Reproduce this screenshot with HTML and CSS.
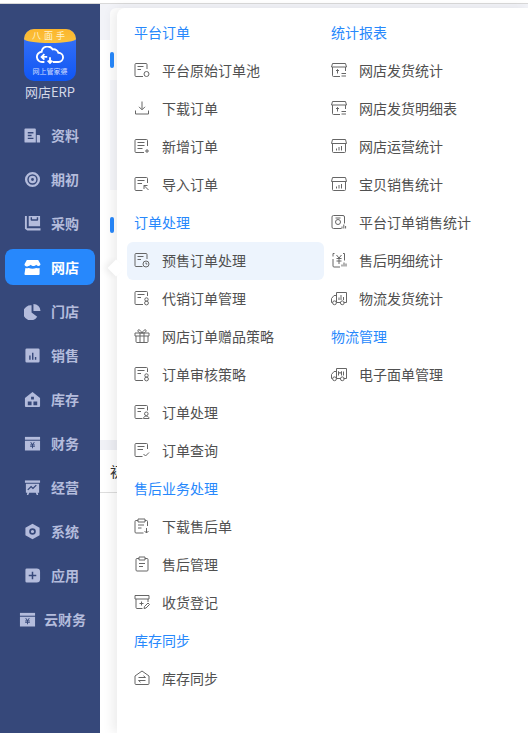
FILE: index.html
```html
<!DOCTYPE html>
<html lang="en">
<head>
  <meta charset="UTF-8" />
  <meta name="viewport" content="width=device-width, initial-scale=1.0"/>
  <title>网店ERP</title>
  <link rel="stylesheet" href="styles.css">
</head>
<body>
  <svg class="defs" aria-hidden="true">
    <!-- menu icons, line style -->
    <symbol id="m-pool" viewBox="0 0 16 16"><path d="M13 7V2.500a1 1 0 0 0-1-1H2a1 1 0 0 0-1 1v11a1 1 0 0 0 1 1h7M3.500 4.500h6M3.500 7.500h3.500"/><circle cx="12.500" cy="12" r="2.500"/></symbol>
    <symbol id="m-down" viewBox="0 0 16 16"><path d="M8 1.500v8M5 6.800l3 3 3-3M1.500 10.500v3.500h13v-3.500"/></symbol>
    <symbol id="m-add" viewBox="0 0 16 16"><path d="M13.500 8V2.500a1 1 0 0 0-1-1H2a1 1 0 0 0-1 1v11a1 1 0 0 0 1 1h8M3.500 4.500h7M3.500 7.500h7M3.500 10.500h5M13 11v4M11 13h4"/></symbol>
    <symbol id="m-import" viewBox="0 0 16 16"><path d="M13.500 7V2.500a1 1 0 0 0-1-1H2a1 1 0 0 0-1 1v11a1 1 0 0 0 1 1h6.500M3.500 4.500h7M3.500 7.500h4.500M10 9.500l4.500 4.500M10 13V9.500h3.500"/></symbol>
    <symbol id="m-clock" viewBox="0 0 16 16"><path d="M13 7V2.500a1 1 0 0 0-1-1H2a1 1 0 0 0-1 1v11a1 1 0 0 0 1 1h6.500M3.500 4.500h6M3.500 7.500h3.500"/><circle cx="12" cy="12" r="3"/><path d="M12 10.500V12h1.300"/></symbol>
    <symbol id="m-agent" viewBox="0 0 16 16"><path d="M13.500 6V2.500a1 1 0 0 0-1-1H2a1 1 0 0 0-1 1v11a1 1 0 0 0 1 1h7M3.500 4.500h7M3.500 7.500h3.500"/><circle cx="12.500" cy="9.500" r="1.700"/><circle cx="12.500" cy="13" r="1.900"/></symbol>
    <symbol id="m-gift" viewBox="0 0 16 16"><path d="M1 5h14v3H1zM2 8v5.500a1 1 0 0 0 1 1h10a1 1 0 0 0 1-1V8M6 5v9.500M10 5v9.500M8 5C6 1 3.500 1 4 3.200 4.300 4.500 6 5 8 5c2 0 3.700-.5 4-1.800C12.500 1 10 1 8 5z"/></symbol>
    <symbol id="m-person" viewBox="0 0 16 16"><path d="M13.500 6.500V2.500a1 1 0 0 0-1-1H2a1 1 0 0 0-1 1v11a1 1 0 0 0 1 1h6.500M3.500 4.500h7M3.500 7.500h3.500"/><circle cx="12.300" cy="9.800" r="1.800"/><path d="M9.500 14.500c0-3.200 5.500-3.200 5.500 0z"/></symbol>
    <symbol id="m-check" viewBox="0 0 16 16"><path d="M13.500 7V2.500a1 1 0 0 0-1-1H2a1 1 0 0 0-1 1v11a1 1 0 0 0 1 1h6.500M3.500 4.500h7M3.500 7.500h5.500M9.500 12l2 2 3.500-3.500"/></symbol>
    <symbol id="m-afterdown" viewBox="0 0 16 16"><path d="M13.500 8V3.500a1 1 0 0 0-1-1H11M4 2.500H2a1 1 0 0 0-1 1V14a1 1 0 0 0 1 1h7.500M4 1h7v3H4zM4 7h6M4 10h3.500M12.500 10v5M10.500 13l2 2 2-2"/></symbol>
    <symbol id="m-clip" viewBox="0 0 16 16"><path d="M11 2.500h2a1 1 0 0 1 1 1V14a1 1 0 0 1-1 1H3a1 1 0 0 1-1-1V3.500a1 1 0 0 1 1-1h2M5 1h6v3H5zM5 7.500h6M5 10.500h4"/></symbol>
    <symbol id="m-receive" viewBox="0 0 16 16"><path d="M1 1.500h14v3.500H1zM2 5v8.500a1 1 0 0 0 1 1h5.500M14 5v3M5.500 9.500h4M7.500 7.500v4M10 14.500l.5-2 3.500-3.500 1.500 1.500-3.500 3.500z"/></symbol>
    <symbol id="m-sync" viewBox="0 0 16 16"><path d="M8 1l7 5v7.500a1 1 0 0 1-1 1H2a1 1 0 0 1-1-1V6zM4.500 7.500h7l-2-1.700M11.500 10.500h-7l2 1.700"/></symbol>
    <symbol id="m-ship" viewBox="0 0 16 16"><path d="M1.500 1.500h13l1 3.500h-15zM1.500 5v8.500a1 1 0 0 0 1 1H9M14.500 5v4M6.500 11.500V7.500M5 9l1.500-1.500L8 9M10.500 11.500h4.500M10.500 14h4.500"/></symbol>
    <symbol id="m-shop" viewBox="0 0 16 16"><path d="M1.500 1.500h13l1 4h-15zM1.500 5.500v8a1 1 0 0 0 1 1h11a1 1 0 0 0 1-1v-8M5.500 12.500v-2M8 12.500V9M10.500 12.500V8"/></symbol>
    <symbol id="m-platform" viewBox="0 0 16 16"><path d="M10.500 14.500H2.500A1.500 1.500 0 0 1 1 13V3a1.500 1.500 0 0 1 1.500-1.500h9.500A1.500 1.500 0 0 1 13.500 3v6.500M4.500 4h5"/><circle cx="7" cy="8" r="2.500"/><path d="M11 14.500V12.500M12.800 14.500V10.500M14.600 14.500V12"/></symbol>
    <symbol id="m-yen" viewBox="0 0 16 16"><path d="M3.500 1.500H2v3M12 1.500h1.500v7M2 7v7a1 1 0 0 0 1 1h6M5.500 3l2.500 3 2.500-3M5.500 6.500h5M5.500 9h5M8 6v6M11 14.500V12.500M13 14.500V10.500M15 14.500V11.500"/></symbol>
    <symbol id="m-truck" viewBox="0 0 16 16"><path d="M5.500 12.500h4.500M12.500 12.500h3V2.500h-10v10M5.500 5.500H3L.5 8.500v4h1M8 10V7.500M10 10V5M12.500 10V7"/><circle cx="3.500" cy="12.800" r="1.900"/><circle cx="11.300" cy="12.800" r="1.900"/></symbol>
    <symbol id="m-waybill" viewBox="0 0 16 16"><path d="M5.500 12.500h4.500M12.500 12.500h3V2.500h-10v10M5.500 5.500H3L.5 8.500v4h1M7.500 9.500V5.500l1.500 2 1.500-2v4M12.500 5.500v4"/><circle cx="3.500" cy="12.800" r="1.900"/><circle cx="11.300" cy="12.800" r="1.900"/></symbol>
  </svg>

  <div class="topline"></div>

  <div class="page">
    <aside class="sidebar">
      <div class="logo">
        <div class="logoBox">
          <div class="logoTop">八面手</div>
          <svg class="logoCloud" viewBox="0 0 30 20">
            <path d="M9 17H7a5.500 5.500 0 0 1-1-11 6.500 6.500 0 0 1 12-2.500 5 5 0 0 1 6 3.500 5 5 0 0 1 0 10h-6M6 11.500h6M9 8.500l-3 3 3 3M15 12v6M12.500 15.500l2.500 2.500 2.500-2.500"/>
          </svg>
          <div class="logoText">网上管家婆</div>
        </div>
        <div class="logoName">网店ERP</div>
      </div>

      <a class="navItem">
        <svg class="navIcon" viewBox="0 0 18 18"><path d="M1.500 1.500h10a1 1 0 0 1 1 1v14h-11a1 1 0 0 1-1-1v-13a1 1 0 0 1 1-1z"/><path class="cut" d="M4 6h6M4 9h4M4 12h6"/><path d="M13.500 8.500h2.500a1 1 0 0 1 1 1v7h-3.500z"/></svg>
        <span>资料</span>
      </a>
      <a class="navItem">
        <svg class="navIcon" viewBox="0 0 18 18"><path fill-rule="evenodd" d="M9 1a8 8 0 1 1 0 16A8 8 0 0 1 9 1zm0 2.500a5.500 5.500 0 1 0 0 11 5.500 5.500 0 0 0 0-11z"/><path fill-rule="evenodd" d="M9 5a4 4 0 1 1 0 8 4 4 0 0 1 0-8zm0 2.500a1.500 1.500 0 1 0 0 3 1.500 1.500 0 0 0 0-3z"/></svg>
        <span>期初</span>
      </a>
      <a class="navItem">
        <svg class="navIcon" viewBox="0 0 18 18"><path d="M1 1h2v13h14.500v2.500H3.500L1 14.500z"/><path fill-rule="evenodd" d="M5 1h12v11H5zm2 1.500v2.500a1 1 0 0 0 1 1h6a1 1 0 0 0 1-1V2.500h-1.500V4.500h-5V2.500z"/></svg>
        <span>采购</span>
      </a>
      <a class="navItem active">
        <svg class="navIcon" viewBox="0 0 18 18"><path d="M3 1h12l2.500 4.500a2.500 2.500 0 0 1-2 2c-1.200 0-2-.6-2.500-1.300-.5.700-1.700 1.300-3 1.300s-2.500-.6-3-1.300C6.500 6.900 5.700 7.500 4.500 7.500a2.500 2.500 0 0 1-4-2z"/><path d="M1.500 9.500c1.200.5 2.500.4 3.500 0 1.200.6 2.700.8 4 .8s2.800-.2 4-.8c1 .4 2.300.5 3.500 0V16a1 1 0 0 1-1 1h-14a1 1 0 0 1-1-1z"/></svg>
        <span>网店</span>
      </a>
      <a class="navItem">
        <svg class="navIcon" viewBox="0 0 18 18"><path d="M8 2.500V10l6 4.500A8 8 0 1 1 8 2.500z"/><path d="M10 1a7.500 7.500 0 0 1 7.500 7.500H10z"/></svg>
        <span>门店</span>
      </a>
      <a class="navItem">
        <svg class="navIcon" viewBox="0 0 18 18"><path fill-rule="evenodd" d="M3 1.500h12a1.500 1.500 0 0 1 1.500 1.500v12a1.500 1.500 0 0 1-1.500 1.500H3A1.500 1.500 0 0 1 1.500 15V3A1.500 1.500 0 0 1 3 1.500zM5.500 9v4.500H7V9zm3-3v7.500H10V6zm3 4.500v3H13v-3z"/></svg>
        <span>销售</span>
      </a>
      <a class="navItem">
        <svg class="navIcon" viewBox="0 0 18 18"><path fill-rule="evenodd" d="M9 1l8 6.500V16a1 1 0 0 1-1 1H2a1 1 0 0 1-1-1V7.500zM7.500 6v3h3V6zM4 11v4h4v-4zm6 0v4h4v-4z"/></svg>
        <span>库存</span>
      </a>
      <a class="navItem">
        <svg class="navIcon" viewBox="0 0 18 18"><path d="M1 2h16v3H1z"/><path fill-rule="evenodd" d="M1 6h16v10.500H1zm5.500 1.800L8.300 10H6.500v1h2v.8h-2v1h2V14h1v-1.200h2v-1h-2V11h2v-1H9.700l1.800-2.200h-1.200L9 9.500 7.700 7.800z"/></svg>
        <span>财务</span>
      </a>
      <a class="navItem">
        <svg class="navIcon" viewBox="0 0 18 18"><path d="M1 1.500h16v2.500H1z"/><path fill-rule="evenodd" d="M2 5h14v9.500h-1.500L15 17h-1.500l-1-2.500h-7L4.500 17H3l.5-2.500H2zm2.500 7l3-3 2 1.800 4-3.800-1-.8-3 2.800-2-1.800-4 4z"/></svg>
        <span>经营</span>
      </a>
      <a class="navItem">
        <svg class="navIcon" viewBox="0 0 18 18"><path fill-rule="evenodd" d="M9 .8l7.500 4.100v8.200L9 17.200 1.500 13.100V4.900zM9 5.500a3.500 3.500 0 1 0 0 7 3.500 3.500 0 0 0 0-7zM9 7.300a1.700 1.700 0 1 1 0 3.400 1.700 1.700 0 0 1 0-3.400z"/></svg>
        <span>系统</span>
      </a>
      <a class="navItem">
        <svg class="navIcon" viewBox="0 0 18 18"><path fill-rule="evenodd" d="M3 1.500h10.500A3.500 3.500 0 0 1 17 5v8a3.500 3.500 0 0 1-3.500 3.500H3A1.500 1.500 0 0 1 1.500 15V3A1.500 1.500 0 0 1 3 1.500zM8.200 5v3.200H5v1.600h3.200V13h1.600V9.800H13V8.200H9.800V5z"/></svg>
        <span>应用</span>
      </a>
      <a class="navItem wide">
        <svg class="navIcon" viewBox="0 0 18 18"><path d="M1 2h16v3H1z"/><path fill-rule="evenodd" d="M1 6h16v10.500H1zm5.500 1.800L8.300 10H6.500v1h2v.8h-2v1h2V14h1v-1.200h2v-1h-2V11h2v-1H9.700l1.800-2.200h-1.200L9 9.500 7.700 7.800z"/></svg>
        <span>云财务</span>
      </a>
    </aside>

    <main class="content">
      <div class="tabs"><div class="tab"></div></div>
      <div class="block">
        <div class="mark"></div>
        <div class="panel"></div>
        <div class="mark second"></div>
      </div>
      <div class="tableHead"></div>
      <div class="tableRow">初</div>
    </main>
  </div>

  <div class="menu">
    <div class="arrow"></div>
    <div class="menuCol">
      <h3>平台订单</h3>
      <a class="menuItem"><svg class="ico"><use href="#m-pool"/></svg>平台原始订单池</a>
      <a class="menuItem"><svg class="ico"><use href="#m-down"/></svg>下载订单</a>
      <a class="menuItem"><svg class="ico"><use href="#m-add"/></svg>新增订单</a>
      <a class="menuItem"><svg class="ico"><use href="#m-import"/></svg>导入订单</a>
      <h3>订单处理</h3>
      <a class="menuItem current"><svg class="ico"><use href="#m-clock"/></svg>预售订单处理</a>
      <a class="menuItem"><svg class="ico"><use href="#m-agent"/></svg>代销订单管理</a>
      <a class="menuItem"><svg class="ico"><use href="#m-gift"/></svg>网店订单赠品策略</a>
      <a class="menuItem"><svg class="ico"><use href="#m-agent"/></svg>订单审核策略</a>
      <a class="menuItem"><svg class="ico"><use href="#m-person"/></svg>订单处理</a>
      <a class="menuItem"><svg class="ico"><use href="#m-check"/></svg>订单查询</a>
      <h3>售后业务处理</h3>
      <a class="menuItem"><svg class="ico"><use href="#m-afterdown"/></svg>下载售后单</a>
      <a class="menuItem"><svg class="ico"><use href="#m-clip"/></svg>售后管理</a>
      <a class="menuItem"><svg class="ico"><use href="#m-receive"/></svg>收货登记</a>
      <h3>库存同步</h3>
      <a class="menuItem"><svg class="ico"><use href="#m-sync"/></svg>库存同步</a>
    </div>
    <div class="menuCol">
      <h3>统计报表</h3>
      <a class="menuItem"><svg class="ico"><use href="#m-ship"/></svg>网店发货统计</a>
      <a class="menuItem"><svg class="ico"><use href="#m-ship"/></svg>网店发货明细表</a>
      <a class="menuItem"><svg class="ico"><use href="#m-shop"/></svg>网店运营统计</a>
      <a class="menuItem"><svg class="ico"><use href="#m-shop"/></svg>宝贝销售统计</a>
      <a class="menuItem"><svg class="ico"><use href="#m-platform"/></svg>平台订单销售统计</a>
      <a class="menuItem"><svg class="ico"><use href="#m-yen"/></svg>售后明细统计</a>
      <a class="menuItem"><svg class="ico"><use href="#m-truck"/></svg>物流发货统计</a>
      <h3>物流管理</h3>
      <a class="menuItem"><svg class="ico"><use href="#m-waybill"/></svg>电子面单管理</a>
    </div>
  </div>
</body>
</html>
```

FILE: styles.css
```css
*, *::before, *::after { box-sizing: border-box; }
* {
  margin: 0;
  padding: 0;
}

html, body {
  height: 100%;
  overflow: hidden;
}

body {
  display: flex;
  flex-direction: column;
  font-family: "Noto Sans CJK SC", "Noto Sans", sans-serif;
  background-color: white;
  position: relative;
}

.defs {
  position: absolute;
  width: 0;
  height: 0;
}

.topline {
  height: 4px;
  border-bottom: 1px solid #d9d9d9;
  flex: none;
}

.page {
  display: flex;
  flex: 1;
  min-height: 0;
}

/* left nav */
.sidebar {
  width: 100px;
  flex: none;
  background-color: #36487a;
  display: flex;
  flex-direction: column;
  align-items: center;
}

.logo {
  display: flex;
  flex-direction: column;
  align-items: center;
  padding-top: 25px;
  height: 113px;
}

.logoBox {
  width: 52px;
  height: 52px;
  border-radius: 10px;
  background: linear-gradient(#3b74f6, #0f56f5);
  overflow: hidden;
  display: flex;
  flex-direction: column;
  align-items: center;
  flex: none;
}

.logoTop {
  width: 100%;
  height: 14px;
  background: linear-gradient(#fcb62c, #fbc23e);
  border-radius: 0 0 50% 50% / 0 0 4px 4px;
  color: #fff3cf;
  font-size: 9px;
  line-height: 13px;
  letter-spacing: 3px;
  text-align: center;
  flex: none;
}

.logoCloud {
  width: 28px;
  height: 19px;
  margin-top: 3px;
  fill: none;
  stroke: white;
  stroke-width: 2;
  flex: none;
}

.logoText {
  color: #cfdcff;
  font-size: 7px;
  line-height: 10px;
  margin-top: 1px;
  white-space: nowrap;
}

.logoName {
  color: #d5d9e8;
  font-size: 13px;
  line-height: 16px;
  margin-top: 3px;
}

.navItem {
  width: 90px;
  height: 36px;
  margin-bottom: 8px;
  padding-left: 19px;
  flex: none;
  border-radius: 8px;
  display: flex;
  align-items: center;
  gap: 10px;
  color: #b4bcdc;
  font-size: 14px;
  font-weight: bold;
  line-height: 20px;
}

.navItem.wide {
  padding-left: 14px;
  gap: 8px;
}

.navIcon {
  width: 17px;
  height: 17px;
  fill: #b4bcdc;
  flex: none;
}

.navIcon .cut {
  fill: none;
  stroke: #36487a;
  stroke-width: 1.500;
}

.navItem.active {
  background-color: #2788fc;
  color: white;
}

.navItem.active .navIcon { fill: white; }

/* page behind the menu */
.content {
  flex: 1;
  display: flex;
  flex-direction: column;
  min-width: 0;
}

.tabs {
  height: 36px;
  padding: 4px 0 0 10px;
  background-color: #f2f3f8;
  flex: none;
}

.tab {
  height: 100%;
  background-color: white;
  border-top-left-radius: 6px;
}

.block {
  height: 400px;
  flex: none;
  padding: 12px 0 0 10px;
}

.mark {
  width: 4px;
  height: 16px;
  background-color: #2788fc;
  border-radius: 2px;
}

.mark.second { margin-top: 27px; }

.panel {
  height: 110px;
  margin-top: 12px;
  background-color: #f7f8fc;
}

.tableHead {
  height: 10px;
  background-color: #f0f1f6;
  flex: none;
}

.tableRow {
  height: 43px;
  padding-left: 10px;
  font-size: 14px;
  line-height: 43px;
  color: #333;
  border-bottom: 1px solid #ddd;
  flex: none;
}

/* flyout menu, sits over the page */
.menu {
  position: absolute;
  left: 117px;
  top: 8px;
  right: 0;
  bottom: 0;
  padding: 6px 0 0 10px;
  background-color: white;
  border-top-left-radius: 8px;
  box-shadow: -4px 0 12px rgba(0, 0, 0, 0.08);
  display: flex;
}

.arrow {
  position: absolute;
  left: -7px;
  top: 254px;
  width: 12px;
  height: 12px;
  background-color: white;
  transform: rotate(45deg);
  box-shadow: -3px 3px 6px rgba(0, 0, 0, 0.06);
}

.menuCol {
  width: 197px;
  flex: none;
  position: relative;
}

.menuCol h3 {
  height: 38px;
  padding-left: 7px;
  font-size: 14px;
  font-weight: normal;
  line-height: 36px;
  color: #2788fc;
}

.menuItem {
  height: 38px;
  padding-left: 7px;
  padding-bottom: 2px;
  border-radius: 6px;
  display: flex;
  align-items: center;
  font-size: 14px;
  color: #505050;
  white-space: nowrap;
}

.menuItem.current { background-color: #edf4fd; }

.ico {
  width: 16px;
  height: 16px;
  margin-right: 12px;
  flex: none;
  fill: none;
  stroke: #666;
  stroke-width: 1;
}
```
